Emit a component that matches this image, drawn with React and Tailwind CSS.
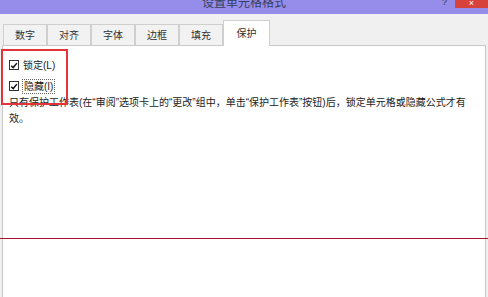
import React from 'react';

const tabs = ['数字', '对齐', '字体', '边框', '填充'];

const CheckBox = () => (
  <span className="w-[10px] h-[10px] border border-[#333] bg-white flex items-center justify-center">
    <svg viewBox="0 0 10 10" className="w-[9px] h-[9px]">
      <path d="M1.5 5.2 L4 7.6 L8.6 2" fill="none" stroke="#111" strokeWidth="1.8" />
    </svg>
  </span>
);

const App = () => {
  return (
    <div
      className="relative w-[488px] h-[297px] overflow-hidden bg-[#f0f0f0] text-[#222]"
      style={{ fontFamily: '"Liberation Sans", "Noto Sans CJK SC", sans-serif' }}
    >
      {/* title bar */}
      <div className="h-[14px] bg-[#968cea] grid grid-cols-[1fr_auto_1fr] overflow-hidden">
        <div />
        <div className="text-[12px] leading-[12px] -mt-[3px] text-[#33405e]">设置单元格格式</div>
        <div className="flex justify-end items-start">
          <span className="text-[9px] leading-[9px] -mt-[2px] mr-[8px] text-[#333]">?</span>
          <span className="w-[33px] h-[8px] bg-[#d8423c] flex items-start justify-center text-white text-[9px] leading-[7px]">×</span>
        </div>
      </div>

      {/* tabs */}
      <div className="h-[31px] flex items-end pl-[3px]">
        {tabs.map((t) => (
          <div
            key={t}
            className="w-[44px] h-[21px] border border-b-0 border-[#cfcfcf] bg-[#f2f2f2] flex items-center justify-center text-[10px] text-[#333]"
          >
            {t}
          </div>
        ))}
        <div className="w-[47px] h-[26px] border border-b-0 border-[#cfcfcf] bg-white -mb-px relative flex items-center justify-center text-[10px] text-[#333]">
          保护
        </div>
      </div>

      {/* panel */}
      <div className="mx-[2px] h-[260px] border border-[#c9c9c9] bg-white pt-[11px] pl-[6px] text-[10px]">
        <div className="h-[16px] flex items-center gap-[3px]">
          <CheckBox />
          <span className="ml-[1px]">锁定(L)</span>
        </div>
        <div className="h-[16px] mt-[5px] flex items-center gap-[3px]">
          <CheckBox />
          <span className="border border-dotted border-[#666] px-[1px] leading-[13px]">隐藏(I)</span>
        </div>
        <p className="mt-[1px] w-[458px] leading-[16px]">
          只有保护工作表(在“审阅”选项卡上的“更改”组中，单击“保护工作表”按钮)后，锁定单元格或隐藏公式才有效。
        </p>
      </div>

      {/* annotation: red box */}
      <div className="absolute left-[1px] top-[49px] w-[67px] h-[56px] border-2 border-[#e3343c]" />
      {/* annotation: red line */}
      <div className="absolute left-0 top-[238px] w-full h-px bg-[#a3102a]" />
    </div>
  );
};

export default App;
